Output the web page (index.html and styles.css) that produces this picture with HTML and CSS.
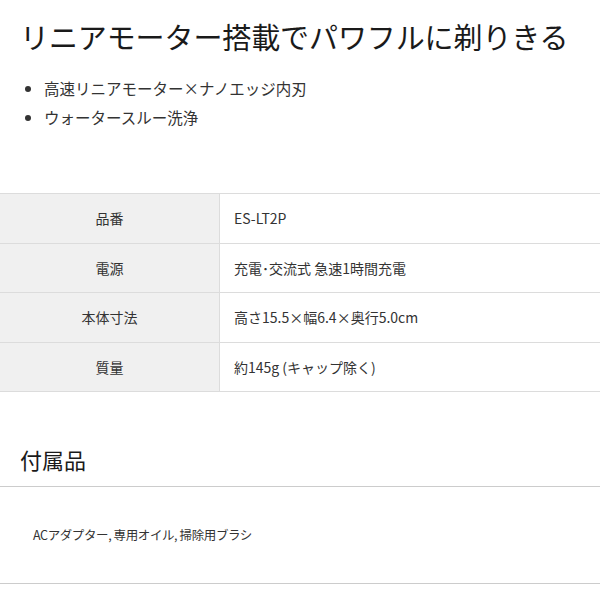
FILE: index.html
```html
<!DOCTYPE html>
<html lang="ja">
<head>
<meta charset="utf-8">
<link rel="stylesheet" href="styles.css">
</head>
<body>
<div class="page">
  <h1 class="title">リニアモーター搭載でパワフルに剃りきる</h1>
  <ul class="features">
    <li>高速リニアモーター×ナノエッジ内刃</li>
    <li>ウォータースルー洗浄</li>
  </ul>
  <table class="spec">
    <tr><th>品番</th><td>ES-LT2P</td></tr>
    <tr><th>電源</th><td>充電･交流式 急速1時間充電</td></tr>
    <tr><th>本体寸法</th><td>高さ15.5×幅6.4×奥行5.0cm</td></tr>
    <tr><th>質量</th><td>約145g (キャップ除く)</td></tr>
  </table>
  <h2 class="sub">付属品</h2>
  <div class="acc">ACアダプター, 専用オイル, 掃除用ブラシ</div>
</div>
</body>
</html>
```

FILE: styles.css
```css
html, body {
  margin: 0;
  padding: 0;
  background: #fff;
}
body {
  font-family: "Noto Sans CJK JP", "Noto Sans", sans-serif;
  color: #222;
}
.page {
  width: 600px;
}
.title {
  margin: 0;
  padding: 16px 0 0 20px;
  font-size: 29px;
  font-weight: 400;
  line-height: 40px;
  color: #1a1a1a;
  letter-spacing: -0.1px;
}
.features {
  margin: 18px 0 0 0;
  padding: 0 0 0 44px;
  font-size: 15.5px;
  line-height: 29px;
  color: #333;
}
.spec {
  margin-top: 61px;
  width: 100%;
  border-collapse: collapse;
  font-size: 14px;
  color: #333;
}
.spec tr {
  border-top: 1px solid #dcdcdc;
  border-bottom: 1px solid #dcdcdc;
}
.spec th {
  width: 219px;
  height: 48.5px;
  padding: 0;
  background: #f0f0f0;
  font-weight: 400;
  text-align: center;
  border-right: 1px solid #dcdcdc;
}
.spec td {
  padding: 0 0 0 14px;
  height: 48.5px;
}
.sub {
  margin: 0;
  padding: 50px 0 10px 20px;
  font-size: 22px;
  font-weight: 400;
  line-height: 34px;
  color: #1a1a1a;
  border-bottom: 1px solid #cccccc;
}
.acc {
  padding: 0 0 0 33px;
  height: 96px;
  line-height: 96px;
  font-size: 12.5px;
  letter-spacing: -0.4px;
  color: #333;
  border-bottom: 1px solid #cccccc;
}
```
